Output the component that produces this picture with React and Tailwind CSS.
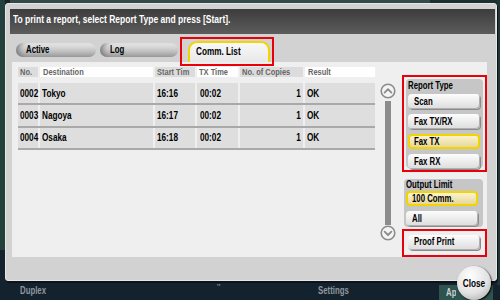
import React from 'react';

const rows = [
  { no: '0002', dest: 'Tokyo', start: '16:16', tx: '00:02', copies: '1', result: 'OK' },
  { no: '0003', dest: 'Nagoya', start: '16:17', tx: '00:02', copies: '1', result: 'OK' },
  { no: '0004', dest: 'Osaka', start: '16:18', tx: '00:02', copies: '1', result: 'OK' },
];

// the panel font is a condensed face, so squeeze the text horizontally
const T = ({ children, right, sx = 'scale-x-[0.78]' }) => (
  <span className={`inline-block whitespace-nowrap ${sx} ${right ? 'origin-right' : 'origin-left'}`}>{children}</span>
);

const Circle = ({ up }) => (
  <svg width="16" height="16" viewBox="0 0 16 16" className="block">
    <circle cx="8" cy="8" r="6.8" fill="#f4f4f4" stroke="#8c8c8c" strokeWidth="1.6" />
    <path d={up ? 'M4.6 9.6 L8 6.2 L11.4 9.6' : 'M4.6 6.6 L8 10 L11.4 6.6'} fill="none" stroke="#8c8c8c" strokeWidth="1.8" strokeLinecap="round" strokeLinejoin="round" />
  </svg>
);

const Btn = ({ label, selected }) => (
  <div
    className={`h-[15px] w-[72px] rounded-[4px] flex items-center text-[10px] font-bold text-black leading-none ${
      selected
        ? 'border-2 border-[#f2d400] bg-[linear-gradient(#fbf3cf,#e6d79a)] pl-[4px]'
        : 'pl-[6px] bg-[linear-gradient(#fdfdfd,#dcdcdc)] shadow-[1px_1px_0_#8a8a8a,inset_-1px_-1px_0_#b0b0b0]'
    }`}
  >
    <T>{label}</T>
  </div>
);

const Tab = ({ label, w }) => (
  <div className={`${w} h-[14px] rounded-full bg-[linear-gradient(#ececec,#c4c4c4_55%,#9c9c9c)] shadow-[inset_6px_0_6px_-4px_#6e6e6e] flex items-center pl-[10px] text-[10px] font-bold text-black leading-none`}>
    <T>{label}</T>
  </div>
);

export default function App() {
  return (
    <div className="relative w-[500px] h-[300px] overflow-hidden bg-[#14222e] font-['Liberation_Sans',Arial,sans-serif]">
      {/* background screen behind the dialog */}
      <div className="h-[3px] bg-[linear-gradient(90deg,#1e2424_0,#1e2424_10px,#344a48_10px,#344a48_430px,#1c3030_430px)]" />
      <div className="absolute left-0 top-0 w-[5px] h-[250px] bg-[#23403d]" />
      <div className="absolute right-0 top-0 w-[3px] h-[285px] bg-[#1f3634]" />

      <div className="absolute left-0 bottom-0 w-full h-[19px] flex items-center text-[10px] font-bold text-[#8d979f] leading-none">
        <span className="ml-[20px] w-[40px]"><T>Duplex</T></span>
        <span className="ml-[157px] mb-[9px] text-[7px]">''</span>
        <span className="ml-[98px] w-[40px]"><T>Settings</T></span>
        <div className="ml-auto mr-[7px] mt-[4px] w-[54px] h-[15px] bg-[#2f5450] text-[#c9d3d2] pl-[7px] flex items-center">
          <span className="w-[10px] overflow-hidden"><T>Apply</T></span>
        </div>
      </div>

      {/* dialog */}
      <div className="absolute left-[5px] top-[3px] w-[492px] h-[278px] bg-[#d2d2d2] rounded-[3px] border border-[#e6e6e6] shadow-[1px_2px_0_#0c141a]">
        <div className="mt-[5px] ml-[4px] mr-[1px] h-[25px] bg-[linear-gradient(#3c3c3c,#5c5c5c)] flex items-center pl-[3px] pb-[4px] text-[10px] font-bold text-white leading-none">
          <T sx="scale-x-[0.85]">To print a report, select Report Type and press [Start].</T>
        </div>

        <div className="relative h-[28px] flex items-end">
          <div className="flex items-center gap-[4px] ml-[10px] mb-[5px]">
            <Tab label="Active" w="w-[80px]" />
            <Tab label="Log" w="w-[78px]" />
          </div>
          <div className="ml-[10px] w-[82px] h-[21px] rounded-t-[9px] border-t-2 border-x-2 border-[#f2d400] bg-[linear-gradient(#f8f8f8,#e8e8e8)] pl-[6px] pt-[4px] text-[10px] font-bold text-black leading-none">
            <T sx="scale-x-[0.82]">Comm. List</T>
          </div>
          <div className="absolute left-[174px] top-[3px] w-[94px] h-[29px] border-2 border-[#e8000b] z-10" />
        </div>

        {/* main panel */}
        <div className="relative ml-[6px] w-[475px] h-[195px] bg-[#efefef] flex">
          <div className="ml-[6px] mt-[5px] w-[357px]">
            <div className="flex gap-[2px] h-[10px] text-[8.5px] font-bold text-[#666] leading-none">
              <div className="w-[20px] bg-[#dcdcdc] pl-[2px] flex items-center"><T sx="scale-x-[0.88]">No.</T></div>
              <div className="w-[113px] bg-white pl-[3px] flex items-center"><T sx="scale-x-[0.88]">Destination</T></div>
              <div className="w-[40px] bg-[#dcdcdc] pl-[2px] flex items-center overflow-hidden"><T sx="scale-x-[0.88]">Start Tim</T></div>
              <div className="w-[41px] bg-white pl-[2px] flex items-center"><T sx="scale-x-[0.88]">TX Time</T></div>
              <div className="w-[63px] bg-[#dcdcdc] pl-[2px] flex items-center overflow-hidden"><T sx="scale-x-[0.88]">No. of Copies</T></div>
              <div className="w-[70px] bg-white pl-[3px] flex items-center"><T sx="scale-x-[0.88]">Result</T></div>
            </div>
            <div className="mt-[6px]">
              {rows.map((r) => (
                <div key={r.no} className="flex gap-[2px] h-[22.3px] border-b-2 border-[#a9a9a9] text-[10.5px] font-bold text-black leading-none">
                  <div className="w-[20px] bg-[#dedede] pl-[2px] flex items-center"><T>{r.no}</T></div>
                  <div className="w-[113px] bg-[#dedede] pl-[2px] flex items-center"><T>{r.dest}</T></div>
                  <div className="w-[40px] bg-[#dedede] pl-[2px] flex items-center"><T>{r.start}</T></div>
                  <div className="w-[41px] bg-[#dedede] pl-[3px] flex items-center"><T>{r.tx}</T></div>
                  <div className="w-[63px] bg-[#dedede] pr-[2px] flex items-center justify-end"><T right>{r.copies}</T></div>
                  <div className="w-[70px] bg-[#dedede] pl-[2px] flex items-center"><T>{r.result}</T></div>
                </div>
              ))}
            </div>
          </div>

          {/* scroll */}
          <div className="ml-[5px] mt-[21px] w-[16px] flex flex-col items-center">
            <Circle up />
            <div className="mt-[2px] w-[6px] h-[124px] bg-[#8c8c8c]" />
            <Circle />
          </div>

          {/* right column */}
          <div className="ml-[6px] mt-[13px] flex flex-col">
            <div className="w-[85px] h-[97px] border-2 border-[#e8000b] p-[2px]">
              <div className="w-[77px] h-[89px] bg-[#c6c6c6] rounded-[4px] pl-[2px] pt-[1px]">
                <div className="text-[10px] font-bold text-black leading-none h-[11px] pt-[1px]"><T>Report Type</T></div>
                <div className="mt-[3px] flex flex-col gap-[5px]">
                  <Btn label="Scan" />
                  <Btn label="Fax TX/RX" />
                  <Btn label="Fax TX" selected />
                  <Btn label="Fax RX" />
                </div>
              </div>
            </div>
            <div className="ml-[2px] mt-[7px] w-[79px] h-[50px] bg-[#c6c6c6] rounded-[4px] pl-[2px] pt-[1px]">
              <div className="text-[10px] font-bold text-black leading-none h-[10px]"><T>Output Limit</T></div>
              <div className="mt-[1px] flex flex-col gap-[5px]">
                <Btn label="100 Comm." selected />
                <Btn label="All" />
              </div>
            </div>
            <div className="mt-[2px] w-[85px] h-[29px] border-2 border-[#e8000b] pl-[4px] pt-[4px]">
              <Btn label="Proof Print" />
            </div>
          </div>
        </div>
      </div>

      {/* close button */}
      <div className="absolute left-[457px] top-[266px] w-[34px] h-[34px] rounded-full bg-[radial-gradient(circle_at_40%_30%,#ffffff,#e2e2e2_55%,#9e9e9e)] shadow-[1px_1px_2px_#000] flex items-center justify-center text-[11px] font-bold text-black leading-none">
        <span className="inline-block scale-x-[0.75]">Close</span>
      </div>
    </div>
  );
}
